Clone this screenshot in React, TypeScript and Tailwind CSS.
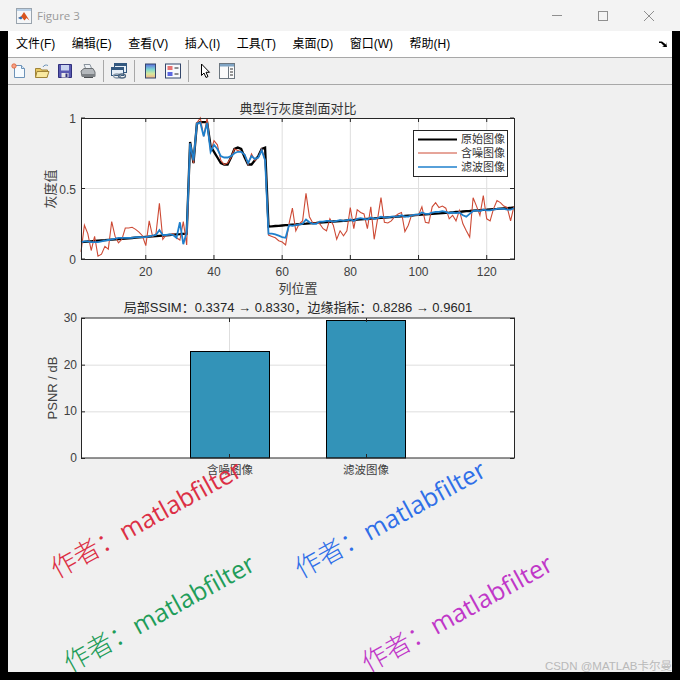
const noisy = [
  0.05, 0.24, 0.18, 0.06, 0.16, 0.02, 0.035, 0.09, 0.07, 0.265, 0.16, 0.115, 0.14, 0.22, 0.22, 0.225,
  0.21, 0.19, 0.165, 0.095, 0.27, 0.16, 0.18, 0.395, 0.14, 0.17, 0.17, 0.18, 0.15, 0.135, 0.265, 0.1,
  0.82, 0.68, 0.965, 1.0, 0.87, 1.0, 0.76, 0.84, 0.81, 0.7, 0.67, 0.68, 0.72, 0.78, 0.77, 0.76,
  0.74, 0.67, 0.745, 0.7, 0.72, 0.78, 0.7, 0.17, 0.16, 0.15, 0.13, 0.12, 0.1, 0.25, 0.36, 0.2,
  0.25, 0.27, 0.465, 0.3, 0.255, 0.255, 0.25, 0.215, 0.2, 0.285, 0.24, 0.14, 0.2, 0.165, 0.2, 0.365,
  0.215, 0.35, 0.33, 0.32, 0.215, 0.37, 0.14, 0.285, 0.435, 0.26, 0.255, 0.27, 0.3, 0.32, 0.33, 0.195,
  0.24, 0.315, 0.31, 0.31, 0.37, 0.26, 0.255, 0.37, 0.4, 0.365, 0.375, 0.36, 0.285, 0.31, 0.27, 0.345,
  0.25, 0.2, 0.155, 0.435, 0.375, 0.31, 0.45, 0.285, 0.27, 0.355, 0.415, 0.4, 0.375, 0.365, 0.27, 0.375,
];

const filtered = [
  0.12, 0.125, 0.125, 0.12, 0.12, 0.12, 0.125, 0.13, 0.135, 0.14, 0.145, 0.15, 0.15, 0.15, 0.15, 0.15,
  0.155, 0.155, 0.155, 0.155, 0.16, 0.165, 0.17, 0.205, 0.17, 0.17, 0.175, 0.17, 0.15, 0.26, 0.105, 0.19,
  0.82, 0.7, 0.96, 0.965, 0.87, 0.965, 0.76, 0.81, 0.78, 0.73, 0.72, 0.72, 0.73, 0.75, 0.76, 0.76,
  0.74, 0.68, 0.73, 0.71, 0.72, 0.77, 0.7, 0.18, 0.18, 0.175, 0.165, 0.155, 0.15, 0.24, 0.235, 0.24,
  0.245, 0.25, 0.28, 0.26, 0.25, 0.25, 0.265, 0.265, 0.27, 0.27, 0.265, 0.27, 0.275, 0.27, 0.275, 0.28,
  0.27, 0.285, 0.29, 0.285, 0.28, 0.295, 0.285, 0.29, 0.3, 0.295, 0.295, 0.3, 0.3, 0.3, 0.31, 0.3,
  0.3, 0.31, 0.315, 0.315, 0.33, 0.32, 0.32, 0.33, 0.335, 0.335, 0.34, 0.335, 0.325, 0.33, 0.325, 0.33,
  0.31, 0.3, 0.32, 0.34, 0.345, 0.34, 0.35, 0.345, 0.345, 0.35, 0.355, 0.355, 0.355, 0.35, 0.35, 0.36,
];

const high = [
  0.83, 0.68, 0.96, 0.97, 0.97, 0.97, 0.8, 0.76, 0.72, 0.68, 0.67, 0.67, 0.72, 0.78, 0.79, 0.78, 0.72,
  0.67, 0.67, 0.7, 0.73, 0.78, 0.79,
];
const original = Array.from({ length: 128 }, (_, i) => {
  if (i < 32) return 0.12 + (i / 31) * 0.06;
  if (i < 55) return high[i - 32];
  return 0.23 + ((i - 55) / 72) * 0.135;
});

const plotX = (i: number) => 81 + i * (433 / 127);
const plotY = (v: number) => 259 - v * 141;
const toPoints = (data: number[]) => data.map((v, i) => `${plotX(i).toFixed(1)},${plotY(v).toFixed(1)}`).join(" ");

const menus = ["文件(F)", "编辑(E)", "查看(V)", "插入(I)", "工具(T)", "桌面(D)", "窗口(W)", "帮助(H)"];

const marks = [
  { left: 61, top: 550, color: "text-[#dc2f45]" },
  { left: 305, top: 550, color: "text-[#2f6fe8]" },
  { left: 74, top: 644, color: "text-[#1f9d5a]" },
  { left: 372, top: 644, color: "text-[#c037c8]" },
];

const Sep = () => <div className="h-[22px] w-px bg-[#a8a8a8]" />;

const ProfileChart = () => {
  const xTicks = [20, 40, 60, 80, 100, 120];
  const yTicks = [0, 0.5, 1];
  return (
    <svg viewBox="8 100 664 196" className="block h-[196px] w-[664px] shrink-0">
      <rect x="81" y="118" width="433" height="141" fill="#fff" />
      {xTicks.map((t) => (
        <line key={t} x1={plotX(t - 1)} x2={plotX(t - 1)} y1="118" y2="259" stroke="#dedede" />
      ))}
      <line x1="81" x2="514" y1="188.5" y2="188.5" stroke="#dedede" />
      <polyline points={toPoints(original)} fill="none" stroke="#000" strokeWidth="2.3" />
      <polyline points={toPoints(noisy)} fill="none" stroke="#cd4a35" strokeWidth="1.1" />
      <polyline points={toPoints(filtered)} fill="none" stroke="#1f80cc" strokeWidth="1.8" />
      <rect x="81.5" y="118.5" width="433" height="141" fill="none" stroke="#262626" />
      {xTicks.map((t) => (
        <g key={t}>
          <line x1={plotX(t - 1)} x2={plotX(t - 1)} y1="259" y2="255" stroke="#262626" />
          <line x1={plotX(t - 1)} x2={plotX(t - 1)} y1="118" y2="122" stroke="#262626" />
          <text x={plotX(t - 1)} y="276" textAnchor="middle" className="fill-[#404040] text-[12px]">
            {t}
          </text>
        </g>
      ))}
      {yTicks.map((t) => (
        <g key={t}>
          <line x1="81" x2="85" y1={plotY(t)} y2={plotY(t)} stroke="#262626" />
          <line x1="510" x2="514" y1={plotY(t)} y2={plotY(t)} stroke="#262626" />
          <text x="76" y={plotY(t) + 5} textAnchor="end" className="fill-[#404040] text-[12px]">
            {t}
          </text>
        </g>
      ))}
      <text x="298" y="113" textAnchor="middle" className="fill-[#333] text-[13px]">
        典型行灰度剖面对比
      </text>
      <text x="298" y="293" textAnchor="middle" className="fill-[#404040] text-[13px]">
        列位置
      </text>
      <text transform="translate(55 189) rotate(-90)" textAnchor="middle" className="fill-[#404040] text-[13px]">
        灰度值
      </text>
      <rect x="413.5" y="130.5" width="94" height="46" fill="#fff" stroke="#262626" />
      <line x1="418" x2="457" y1="139.5" y2="139.5" stroke="#000" strokeWidth="2" />
      <line x1="418" x2="457" y1="153" y2="153" stroke="#cd4a35" />
      <line x1="418" x2="457" y1="167" y2="167" stroke="#1f80cc" strokeWidth="1.5" />
      <text x="461" y="143" className="fill-[#333] text-[11px]">原始图像</text>
      <text x="461" y="157" className="fill-[#333] text-[11px]">含噪图像</text>
      <text x="461" y="171" className="fill-[#333] text-[11px]">滤波图像</text>
    </svg>
  );
};

const PsnrChart = () => {
  const y = (v: number) => 458 - (v / 30) * 140;
  return (
    <svg viewBox="8 296 664 184" className="block h-[184px] w-[664px] shrink-0">
      <rect x="81" y="318" width="433" height="140" fill="#fff" />
      {[10, 20].map((t) => (
        <line key={t} x1="81" x2="514" y1={y(t) + 0.5} y2={y(t) + 0.5} stroke="#dedede" />
      ))}
      {[229.5, 366.5].map((x) => (
        <line key={x} x1={x} x2={x} y1="318" y2="458" stroke="#dedede" />
      ))}
      <rect x="190.5" y="351.5" width="79" height="106.5" fill="#3393b8" stroke="#000" />
      <rect x="326.5" y="320.5" width="79" height="137.5" fill="#3393b8" stroke="#000" />
      <rect x="81.5" y="318" width="433" height="140" fill="none" stroke="#262626" />
      {[229.5, 366.5].map((x) => (
        <g key={x}>
          <line x1={x} x2={x} y1="454" y2="458" stroke="#262626" />
          <line x1={x} x2={x} y1="318" y2="322" stroke="#262626" />
        </g>
      ))}
      {[0, 10, 20, 30].map((t) => (
        <g key={t}>
          <line x1="81" x2="85" y1={y(t) + 0.5} y2={y(t) + 0.5} stroke="#262626" />
          <line x1="510" x2="514" y1={y(t) + 0.5} y2={y(t) + 0.5} stroke="#262626" />
          <text x="77" y={y(t) + 4} textAnchor="end" className="fill-[#404040] text-[12px]">
            {t}
          </text>
        </g>
      ))}
      <text x="298" y="312" textAnchor="middle" className="fill-[#262626] text-[13px]">
        局部SSIM：0.3374 → 0.8330，边缘指标：0.8286 → 0.9601
      </text>
      <text transform="translate(57 388) rotate(-90)" textAnchor="middle" className="fill-[#404040] text-[13px]">
        PSNR / dB
      </text>
      <text x="230" y="474" textAnchor="middle" className="fill-[#404040] text-[11.5px]">含噪图像</text>
      <text x="366" y="474" textAnchor="middle" className="fill-[#404040] text-[11.5px]">滤波图像</text>
    </svg>
  );
};

const MatlabIcon = () => (
  <svg viewBox="0 0 16 16" className="h-4 w-4">
    <rect x="0.5" y="0.5" width="15" height="15" fill="#f4f6f8" stroke="#9aa4ae" />
    <rect x="1" y="1" width="14" height="2" fill="#b9d0e6" />
    <path d="M2 10l3-1.5L8 4l2 3 3.5 5.5L10.5 10 8.5 12.5 6 9.5z" fill="#d9541e" />
    <path d="M2 10l3-1.5L6.5 10 5 11.5z" fill="#2d6fb5" />
  </svg>
);

const ToolIcons = {
  newFile: (
    <svg viewBox="0 0 16 16" className="h-4 w-4">
      <path d="M3.5 2.5h7l3 3v9h-10z" fill="#f6fbff" stroke="#6d93b8" />
      <path d="M10.5 2.5v3h3" fill="#dbe8f4" stroke="#6d93b8" />
      <circle cx="3" cy="3" r="2.2" fill="#f3a18a" stroke="#e2602f" strokeWidth="0.8" />
    </svg>
  ),
  open: (
    <svg viewBox="0 0 16 16" className="h-4 w-4">
      <path d="M1.5 5.5h5l1 1.5h6v7h-12z" fill="#e8c860" stroke="#a08438" />
      <path d="M1.5 14.5l1.5-6h12l-2 6z" fill="#f9e9a0" stroke="#a08438" />
      <path d="M9 4c1-2 3-2.5 5-1.5" fill="none" stroke="#6d93b8" />
    </svg>
  ),
  save: (
    <svg viewBox="0 0 16 16" className="h-4 w-4">
      <path d="M1.5 1.5h13v13h-13z" fill="#5858b0" stroke="#30307c" />
      <rect x="4" y="2" width="8" height="5.5" fill="#c9d3ef" />
      <rect x="4.5" y="10" width="7" height="4.5" fill="#e8e8e8" />
      <rect x="8.5" y="10.5" width="2" height="3.5" fill="#30307c" />
    </svg>
  ),
  print: (
    <svg viewBox="0 0 16 16" className="h-4 w-4">
      <path d="M4 1.5h6l2 5H6z" fill="#eef2f6" stroke="#88929c" />
      <path d="M1 8l3-2.5h9L15 9v4.5H2z" fill="#b4b8bc" stroke="#6c7074" />
      <path d="M2 11h13v3H2z" fill="#7d8185" />
      <path d="M4 14.5h9" stroke="#4b4e51" />
    </svg>
  ),
  link: (
    <svg viewBox="0 0 16 16" className="h-4 w-4">
      <rect x="3.5" y="0.5" width="12" height="9" fill="#e7eff7" stroke="#33587f" />
      <rect x="4" y="1" width="11" height="2" fill="#33587f" />
      <rect x="0.5" y="4.5" width="12" height="8" fill="#e7eff7" stroke="#33587f" />
      <rect x="1" y="5" width="11" height="2" fill="#33587f" />
      <ellipse cx="6" cy="13" rx="3.5" ry="2" fill="none" stroke="#8898a8" strokeWidth="1.3" />
      <ellipse cx="11" cy="13" rx="3.5" ry="2" fill="none" stroke="#4f6780" strokeWidth="1.3" />
    </svg>
  ),
  colorbar: (
    <svg viewBox="0 0 16 16" className="h-4 w-4">
      <defs>
        <linearGradient id="cb" x1="0" y1="0" x2="0" y2="1">
          <stop offset="0" stopColor="#5a6ee0" />
          <stop offset="0.4" stopColor="#7fd8d0" />
          <stop offset="0.7" stopColor="#d8e89a" />
          <stop offset="1" stopColor="#f0b08a" />
        </linearGradient>
      </defs>
      <rect x="3.5" y="1" width="10" height="14" fill="url(#cb)" stroke="#33466a" />
    </svg>
  ),
  legend: (
    <svg viewBox="0 0 16 16" className="h-4 w-4">
      <rect x="0.5" y="1" width="15" height="14" fill="#f7f9fc" stroke="#33466a" />
      <rect x="2.5" y="3" width="5" height="4" fill="#e87272" />
      <rect x="2.5" y="9" width="5" height="4" fill="#5a66e0" />
      <path d="M9.5 5h4M9.5 11h4" stroke="#222" />
    </svg>
  ),
  cursor: (
    <svg viewBox="0 0 16 16" className="h-4 w-4">
      <path d="M5.5 1v11.5l2.5-2.5 2 4.5 2-1-2-4.2h3.5z" fill="#fff" stroke="#000" strokeLinejoin="round" />
    </svg>
  ),
  panel: (
    <svg viewBox="0 0 16 16" className="h-4 w-4">
      <rect x="0.5" y="0.5" width="15" height="15" fill="#fbfbfb" stroke="#6d7780" />
      <rect x="1" y="1" width="14" height="2.5" fill="#7fa4c4" />
      <path d="M9.5 3.5v12" stroke="#6d7780" />
      <path d="M11 6h3M11 9h3M11 12h3" stroke="#333" />
    </svg>
  ),
};

export default function App() {
  return (
    <div className="flex h-[680px] w-[680px] flex-col overflow-hidden bg-black font-['Liberation_Sans','Noto_Sans_CJK_SC',sans-serif]">
      <div className="flex h-[31px] shrink-0 items-center bg-[#f3f3f3] pr-2 pl-4">
        <MatlabIcon />
        <span className="ml-[5px] font-['Open_Sans',sans-serif] text-[11.5px] text-[#9a9a9a]">Figure 3</span>
        <div className="ml-auto flex">
          <div className="flex h-[31px] w-[46px] items-center justify-center">
            <div className="h-px w-[10px] bg-[#8f8f8f]" />
          </div>
          <div className="flex h-[31px] w-[46px] items-center justify-center">
            <div className="h-[10px] w-[10px] border border-[#8f8f8f]" />
          </div>
          <div className="flex h-[31px] w-[46px] items-center justify-center">
            <svg viewBox="0 0 10 10" className="h-[10px] w-[10px]">
              <path d="M0 0l10 10M10 0L0 10" stroke="#8f8f8f" />
            </svg>
          </div>
        </div>
      </div>

      <div className="mx-2 mb-2 flex min-h-0 flex-1 flex-col">
        <div className="flex h-[27px] shrink-0 items-center gap-[16.5px] border-b border-[#a8a8a8] bg-white pr-[5px] pl-2 text-[12px] text-black">
          {menus.map((m) => (
            <span key={m}>{m}</span>
          ))}
          <svg viewBox="0 0 8 8" className="ml-auto h-2 w-2">
            <path d="M0 1.5h3l4 3V2l1 5H3l2-1-3-3H0z" fill="#000" />
          </svg>
        </div>

        <div className="flex h-[27px] shrink-0 items-center gap-[7px] border-b border-[#a8a8a8] bg-[#f0f0f0] pl-[3px]">
          {ToolIcons.newFile}
          {ToolIcons.open}
          {ToolIcons.save}
          {ToolIcons.print}
          <Sep />
          {ToolIcons.link}
          <Sep />
          {ToolIcons.colorbar}
          {ToolIcons.legend}
          <Sep />
          {ToolIcons.cursor}
          {ToolIcons.panel}
        </div>

        <div className="relative flex min-h-0 flex-1 flex-col overflow-hidden bg-[#f0f0f0] pt-[15px]">
          <ProfileChart />
          <PsnrChart />
          {marks.map((m) => (
            <span
              key={m.left}
              style={{ left: m.left - 8, top: m.top - 85 }}
              className={`absolute origin-bottom-left -rotate-[29deg] font-['Open_Sans','Noto_Sans_CJK_SC',sans-serif] text-[26px] leading-[36px] whitespace-nowrap ${m.color}`}
            >
              <span className="font-light">作者：</span>
              <span className="text-[25px]">matlabfilter</span>
            </span>
          ))}
          <span className="absolute right-0 -bottom-[1px] text-[11.5px] leading-[14px] whitespace-nowrap text-[#b9b9b9]">
            CSDN @MATLAB卡尔曼
          </span>
        </div>
      </div>
    </div>
  );
}
